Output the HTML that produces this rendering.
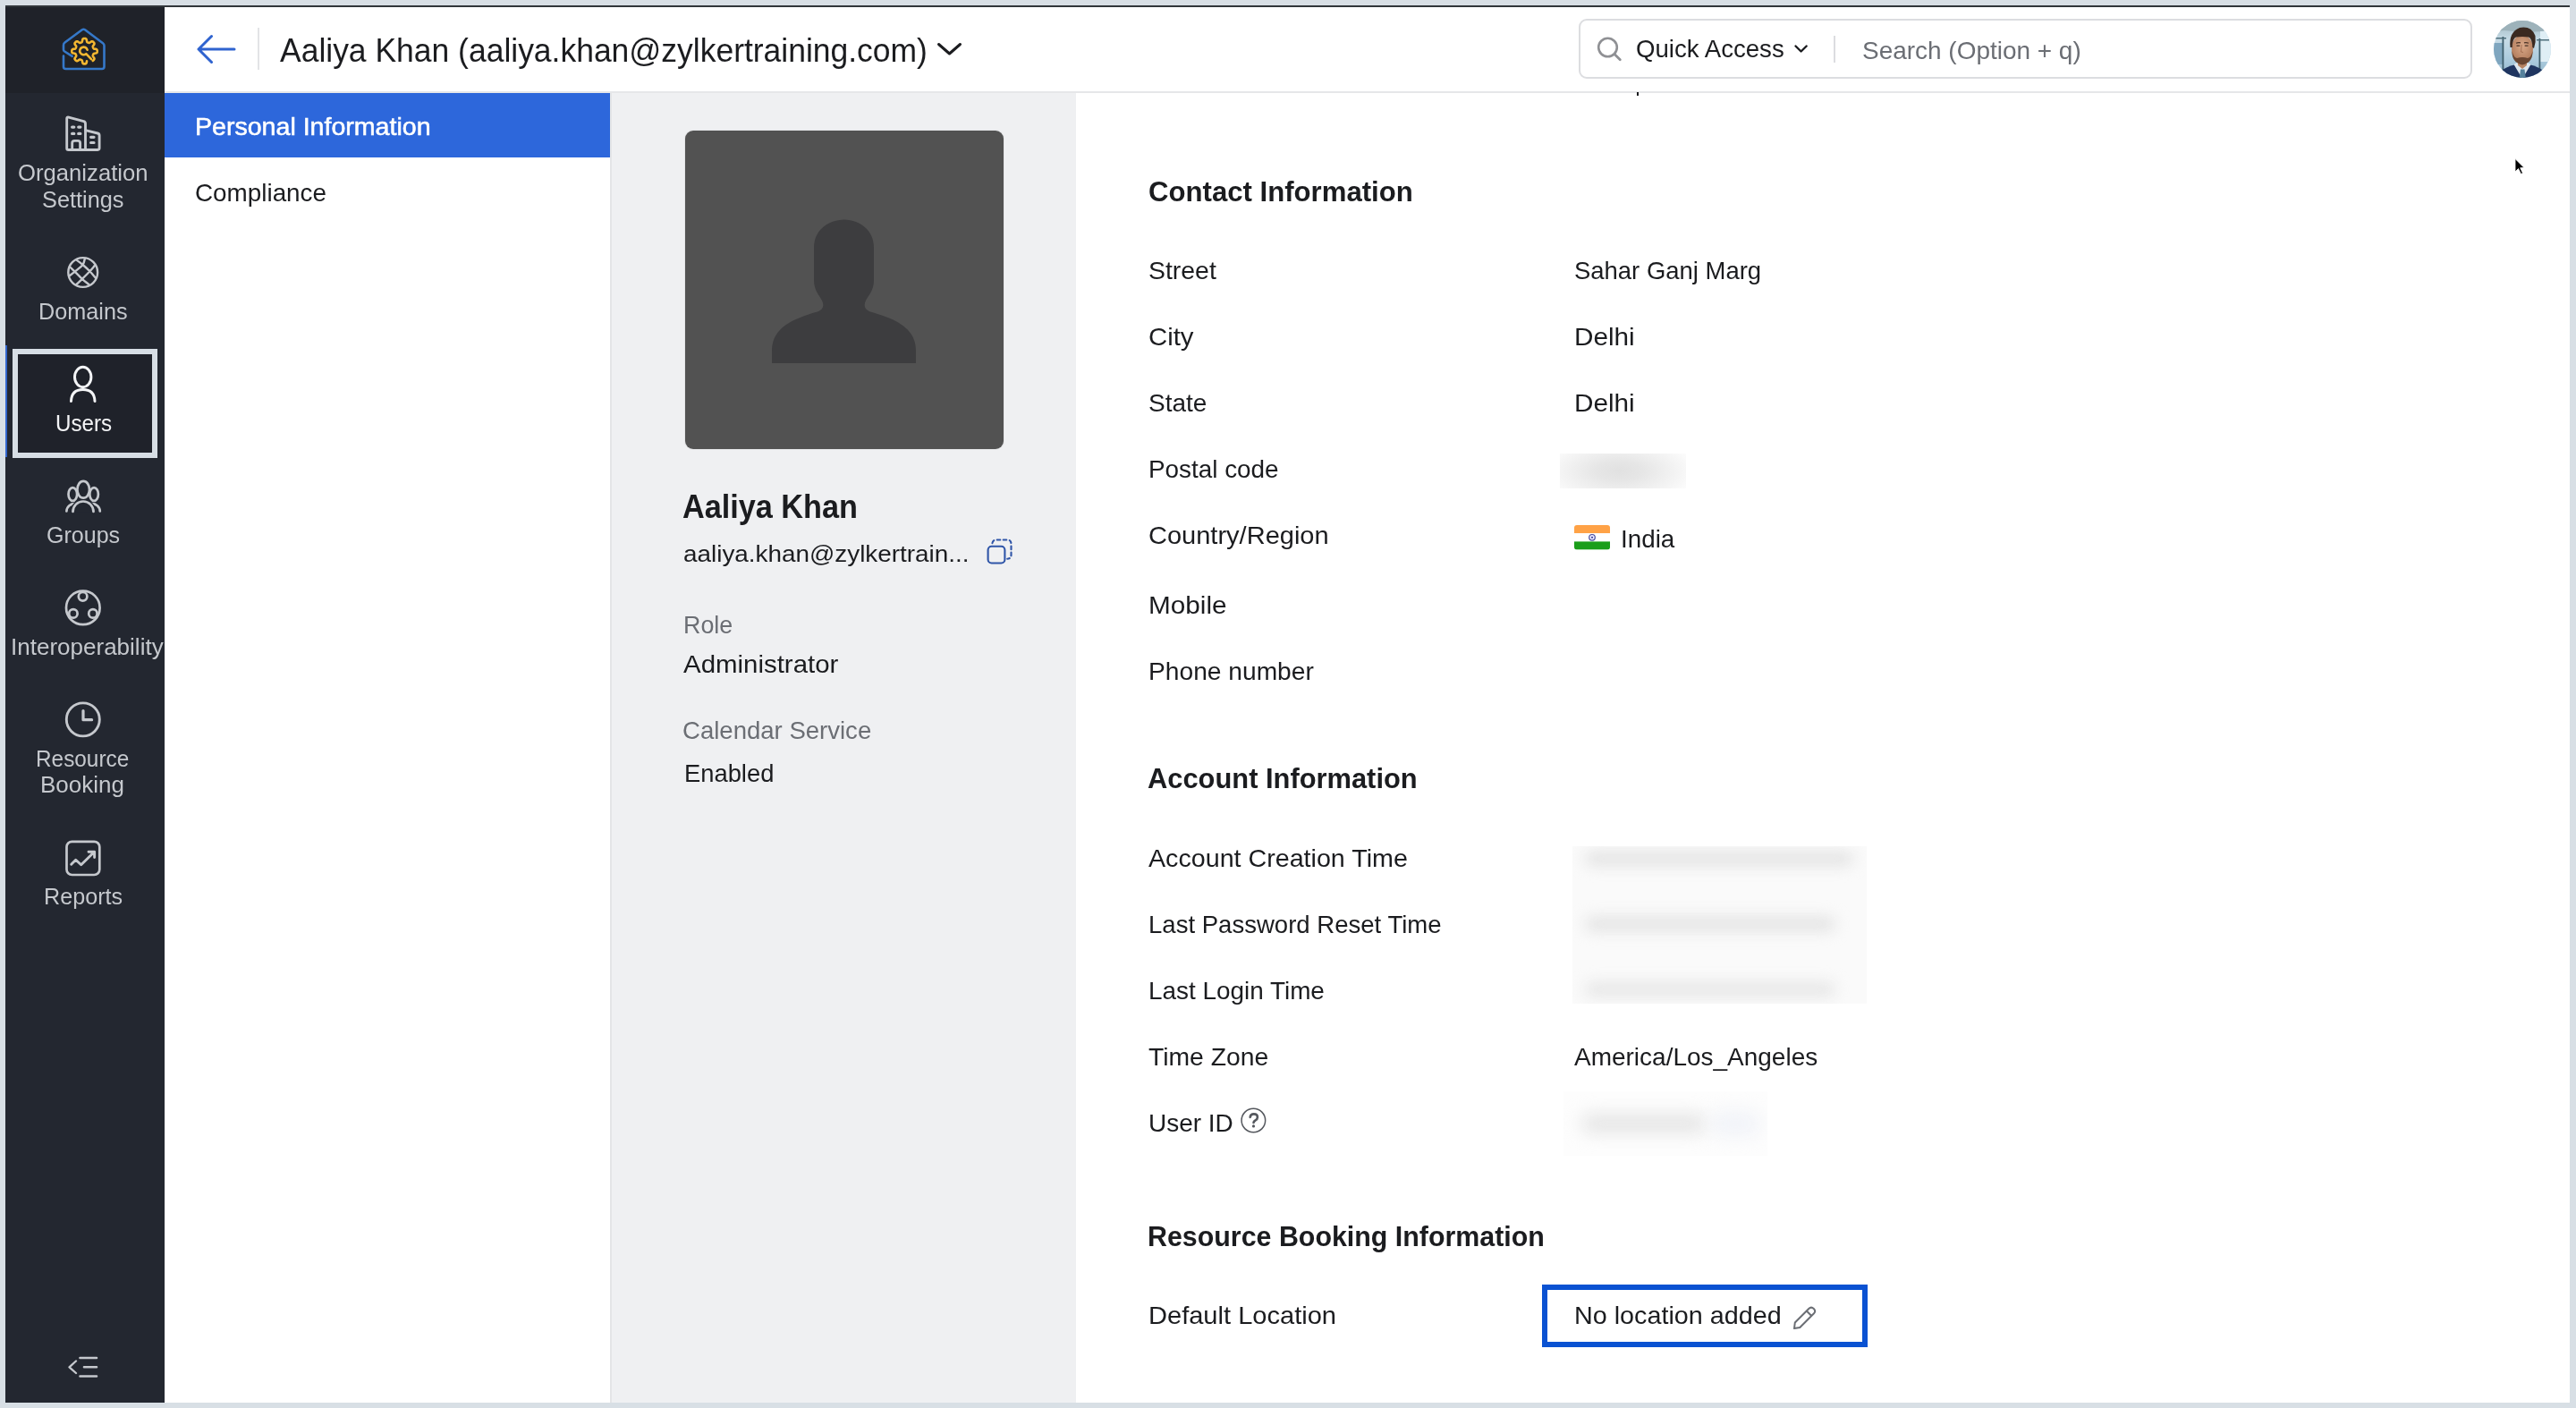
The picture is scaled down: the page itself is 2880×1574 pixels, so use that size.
<!DOCTYPE html>
<html><head><meta charset="utf-8"><style>
*{box-sizing:border-box;margin:0;padding:0}
html,body{width:2880px;height:1574px;overflow:hidden;background:#d8dfe5;font-family:"Liberation Sans",sans-serif}
.abs{position:absolute}
.t{position:absolute;white-space:nowrap;line-height:1;transform-origin:0 0}
</style></head><body>
<div class="abs" style="left:6px;top:6px;width:2867px;height:1562px;background:#ffffff"></div>
<div class="abs" style="left:6px;top:6px;width:2867px;height:2px;background:#31363a"></div>
<!-- sidebar -->
<div class="abs" style="left:6px;top:8px;width:178px;height:1560px;background:#232730"></div>
<div class="abs" style="left:6px;top:8px;width:178px;height:96px;background:#1f2229"></div>
<div class="abs" style="left:6px;top:386px;width:2px;height:125px;background:#3366cc"></div>
<div class="abs" style="left:14px;top:390px;width:162px;height:122px;border:6px solid #d7dee5;background:#1f222a"></div>

<svg class="abs" style="left:0;top:0" width="184" height="1574" viewBox="0 0 184 1574">
 <!-- logo -->
 <g fill="none" stroke-linecap="round" stroke-linejoin="round">
  <path d="M71 62.6 L71 74.5 Q71 77 73.5 77 L114 77 Q116.5 77 116.5 74.5 L116.5 51 Q116.5 49.3 115 48.2 L95 33.3 Q93.4 32.2 91.8 33.3 L72.5 47.5 Q71 48.6 71 50.5 L71 55.5 Q71 56.8 72.2 57.5 L80.7 62.8" stroke="#3578c9" stroke-width="2.6"/>
  <path d="M97.05 68.26 L96.88 69.42 L96.60 70.49 L96.20 71.04 L95.73 71.26 L95.24 71.36 L94.75 71.40 L94.25 71.40 L93.76 71.36 L93.27 71.26 L92.80 71.04 L92.40 70.49 L92.12 69.42 L91.95 68.26 L91.72 67.58 L91.43 67.25 L91.10 67.06 L90.77 66.91 L90.44 66.77 L90.10 66.64 L89.75 66.52 L89.36 66.47 L88.84 66.61 L88.04 67.15 L87.04 67.86 L86.22 68.18 L85.66 68.12 L85.21 67.88 L84.82 67.58 L84.46 67.24 L84.12 66.88 L83.82 66.49 L83.58 66.04 L83.52 65.48 L83.84 64.66 L84.55 63.66 L85.09 62.86 L85.23 62.34 L85.18 61.95 L85.06 61.60 L84.93 61.26 L84.79 60.93 L84.64 60.60 L84.45 60.27 L84.12 59.98 L83.44 59.75 L82.28 59.58 L81.21 59.30 L80.66 58.90 L80.44 58.43 L80.34 57.94 L80.30 57.45 L80.30 56.95 L80.34 56.46 L80.44 55.97 L80.66 55.50 L81.21 55.10 L82.28 54.82 L83.44 54.65 L84.12 54.42 L84.45 54.13 L84.64 53.80 L84.79 53.47 L84.93 53.14 L85.06 52.80 L85.18 52.45 L85.23 52.06 L85.09 51.54 L84.55 50.74 L83.84 49.74 L83.52 48.92 L83.58 48.36 L83.82 47.91 L84.12 47.52 L84.46 47.16 L84.82 46.82 L85.21 46.52 L85.66 46.28 L86.22 46.22 L87.04 46.54 L88.04 47.25 L88.84 47.79 L89.36 47.93 L89.75 47.88 L90.10 47.76 L90.44 47.63 L90.77 47.49 L91.10 47.34 L91.43 47.15 L91.72 46.82 L91.95 46.14 L92.12 44.98 L92.40 43.91 L92.80 43.36 L93.27 43.14 L93.76 43.04 L94.25 43.00 L94.75 43.00 L95.24 43.04 L95.73 43.14 L96.20 43.36 L96.60 43.91 L96.88 44.98 L97.05 46.14 L97.28 46.82 L97.57 47.15 L97.90 47.34 L98.23 47.49 L98.56 47.63 L98.90 47.76 L99.25 47.88 L99.64 47.93 L100.16 47.79 L100.96 47.25 L101.96 46.54 L102.78 46.22 L103.34 46.28 L103.79 46.52 L104.18 46.82 L104.54 47.16 L104.88 47.52 L105.18 47.91 L105.42 48.36 L105.48 48.92 L105.16 49.74 L104.45 50.74 L103.91 51.54 L103.77 52.06 L103.82 52.45 L103.94 52.80 L104.07 53.14 L104.21 53.47 L104.36 53.80 L104.55 54.13 L104.88 54.42 L105.56 54.65 L106.72 54.82 L107.79 55.10 L108.34 55.50 L108.56 55.97 L108.66 56.46 L108.70 56.95 L108.70 57.45 L108.66 57.94 L108.56 58.43 L108.34 58.90 L107.79 59.30 L106.72 59.58 L105.56 59.75 L104.88 59.98 L104.55 60.27 L104.36 60.60 L104.21 60.93 L104.07 61.26 L103.94 61.60 L103.82 61.95 L103.77 62.34 L103.91 62.86 L104.45 63.66 L105.16 64.66 L105.48 65.48 L105.42 66.04 L105.18 66.49 L104.88 66.88 L104.54 67.24 L104.18 67.58 L103.79 67.88" stroke="#f4b731" stroke-width="2.6"/>
  <path d="M97.65 55.79 A4.3 4.3 0 1 0 96.26 60.19 L102 66.2" stroke="#f4b731" stroke-width="2.6"/>
 </g>
 <g fill="none" stroke="#c5c8cd" stroke-width="2.7" stroke-linecap="round" stroke-linejoin="round">
  <!-- building -->
  <path d="M74.7 132.6 Q74.7 130.5 76.8 131.1 L93.6 135.6 Q95.5 136.2 95.5 138.2 L95.5 167.5 L76.5 167.5 Q74.7 167.5 74.7 165.7 Z" stroke-width="2.85"/>
  <path d="M95.5 145.6 L109.2 149 Q111.1 149.5 111.1 151.5 L111.1 165.6 Q111.1 167.5 109.2 167.5 L95.5 167.5" stroke-width="2.85"/>
  <path d="M80.6 142.1 h2.2 M87.7 142.1 h2.2 M80.6 149.4 h2.2 M87.7 149.4 h2.2 M101.6 153.3 h3.4 M101.6 159.5 h3.4" stroke-width="3.2"/>
  <path d="M80.7 167.5 V160 Q80.7 157.4 83.3 157.4 H87 Q89.6 157.4 89.6 160 V167.5" stroke-width="2.85"/>
  <!-- globe -->
  <circle cx="92.7" cy="304.5" r="16.4" stroke-width="2.4"/>
  <path d="M85.55 290.64 C87.88 292.43 90.07 293.90 92.55 296.00 C95.03 298.10 97.99 300.80 100.40 303.25 C102.81 305.70 104.80 308.23 107.01 310.72 M94.87 289.05 C94.10 291.37 94.41 293.58 92.55 296.00 C90.69 298.42 86.20 301.55 83.70 303.60 C81.20 305.65 79.61 306.72 77.56 308.27 M78.30 298.50 C80.10 300.20 81.43 301.38 83.70 303.60 C85.97 305.82 89.22 309.34 91.90 311.80 C94.58 314.26 97.17 316.19 99.81 318.39 M106.18 296.65 C104.26 298.85 102.78 300.73 100.40 303.25 C98.02 305.77 94.43 309.31 91.90 311.80 C89.37 314.29 87.44 316.06 85.21 318.18" stroke-width="2.4"/>
  <!-- groups -->
  <ellipse cx="81.3" cy="552.5" rx="4.8" ry="7.3"/>
  <ellipse cx="105.1" cy="552.5" rx="4.8" ry="7.3"/>
  <path d="M74.4 571.5 A8.8 8.8 0 0 1 84 563.2 M111.8 571.5 A8.8 8.8 0 0 0 102.2 563.2"/>
  <ellipse cx="93.2" cy="547.3" rx="6.8" ry="9.4" fill="#232730"/>
  <path d="M81.5 572.5 A11.5 11.5 0 0 1 104.5 572.5" fill="#232730" stroke="#232730" stroke-width="6"/>
  <path d="M81.5 572 A11.5 11.5 0 0 1 104.5 572"/>
  <!-- interoperability -->
  <circle cx="92.8" cy="679.4" r="18.8"/>
  <circle cx="92.6" cy="666.8" r="4.8" fill="#232730"/>
  <circle cx="81.9" cy="685.9" r="4.7" fill="#232730"/>
  <circle cx="103.9" cy="685.9" r="4.7" fill="#232730"/>
  <!-- clock -->
  <circle cx="92.8" cy="804.35" r="18.5" stroke-width="2.9"/>
  <path d="M93 794.5 V804.7 H102.6" stroke-width="3.2"/>
  <!-- reports -->
  <rect x="74.5" y="940.8" width="36.8" height="37.2" rx="6"/>
  <path d="M79.7 966.3 L84.7 961.3 L90.7 966.8 L105 952.7 M99 952.3 H105.6 V958.5" stroke-width="2.9"/>
  <!-- collapse -->
  <path d="M85 1521.5 L77.5 1528.3 L85 1535" stroke-width="2.3"/>
  <path d="M89.5 1518 H108 M94 1528.3 H108 M89.5 1538.5 H108" stroke-width="2.6"/>
 </g>
 <g fill="none" stroke="#f4f5f7" stroke-width="3" stroke-linecap="round">
  <ellipse cx="92.7" cy="421.5" rx="9.2" ry="11.2"/>
  <path d="M79.5 448.5 Q80 435.5 92.7 435.5 Q105.5 435.5 106 448.5"/>
 </g>
</svg>
<!-- header -->
<div class="abs" style="left:184px;top:102px;width:2689px;height:2px;background:#e6e7e9"></div>
<svg class="abs" style="left:210px;top:30px" width="70" height="50" viewBox="210 30 70 50">
 <path d="M262 55 H222.5 M236.5 40.5 L222 55 L236.5 69.5" fill="none" stroke="#2f63cf" stroke-width="3" stroke-linecap="round" stroke-linejoin="round"/>
</svg>
<div class="abs" style="left:288px;top:31px;width:2px;height:47px;background:#e3e4e6"></div>
<svg class="abs" style="left:1040px;top:40px" width="40" height="30" viewBox="1040 40 40 30">
 <path d="M1049.5 49.5 L1061.5 60 L1073.5 49.5" fill="none" stroke="#1b1c1f" stroke-width="3" stroke-linecap="round" stroke-linejoin="round"/>
</svg>
<div class="abs" style="left:1765px;top:21px;width:999px;height:67px;border:2px solid #dcdde0;border-radius:9px"></div>
<svg class="abs" style="left:1780px;top:36px" width="40" height="40" viewBox="1780 36 40 40">
 <circle cx="1797.5" cy="53" r="10.3" fill="none" stroke="#8f9094" stroke-width="2.6"/>
 <path d="M1805 60.5 L1811.3 66.8" stroke="#8f9094" stroke-width="2.8" stroke-linecap="round"/>
</svg>
<svg class="abs" style="left:2000px;top:44px" width="30" height="20" viewBox="2000 44 30 20">
 <path d="M2007.5 51.5 L2013.6 57.5 L2019.7 51.5" fill="none" stroke="#1b1c1f" stroke-width="2.4" stroke-linecap="round" stroke-linejoin="round"/>
</svg>
<div class="abs" style="left:2050px;top:40px;width:2px;height:30px;background:#dcdde0"></div>

<svg class="abs" style="left:2786px;top:21px" width="68" height="68" viewBox="2786 21 68 68">
 <defs>
  <clipPath id="av"><circle cx="2820" cy="55" r="32"/></clipPath>
  <linearGradient id="avbg" x1="0" y1="0" x2="0" y2="1">
   <stop offset="0" stop-color="#9fb6c0"/><stop offset=".35" stop-color="#c6dbe6"/><stop offset=".7" stop-color="#a9c9dc"/><stop offset="1" stop-color="#8fb3c8"/>
  </linearGradient>
  <radialGradient id="face" cx=".5" cy=".4" r=".6">
   <stop offset="0" stop-color="#d9a888"/><stop offset="1" stop-color="#b07a5a"/>
  </radialGradient>
 </defs>
 <g clip-path="url(#av)">
  <rect x="2786" y="21" width="68" height="68" fill="url(#avbg)"/>
  <path d="M2786 23 L2854 23 L2854 33 Q2830 38 2800 34 L2786 36 Z" fill="#9db2ba"/>
  <rect x="2840" y="35" width="14" height="34" fill="#dfeef5"/>
  <rect x="2786" y="48" width="12" height="24" fill="#7fa6bf"/>
  <rect x="2797.5" y="41" width="1.8" height="44" fill="#3f5e6c"/>
  <rect x="2838.5" y="43" width="1.8" height="42" fill="#3f5e6c"/>
  <rect x="2790" y="42" width="12" height="1.5" fill="#4f6f7c"/>
  <rect x="2836" y="44" width="14" height="1.5" fill="#4f6f7c"/>
  <path d="M2792 89 L2795 80 Q2803 74 2811 72.5 L2829 72.5 Q2837 74 2845 80 L2848 89 Z" fill="#1f3560"/>
  <path d="M2810.5 72 L2820 88 L2829.5 72 L2824 69 L2816 69 Z" fill="#dde7ef"/>
  <path d="M2818 77.5 L2822.5 77.5 L2824 89 L2816.5 89 Z" fill="#55819c"/>
  <path d="M2815 65 L2815 73 L2820 77 L2825 73 L2825 65 Z" fill="#b58363"/>
  <ellipse cx="2820" cy="54.5" rx="12" ry="15.5" fill="url(#face)"/>
  <path d="M2808.5 57 Q2808 70 2820 72.5 Q2832 70 2831.5 57 Q2830 64 2826 65 Q2820 63 2814 65 Q2810 64 2808.5 57 Z" fill="#6a4632"/>
  <path d="M2813.5 51.2 h3.8 M2822.7 51.2 h3.8" stroke="#4a3428" stroke-width="1.2"/>
  <path d="M2813 48.3 Q2815.5 47.2 2818 47.9 M2822 47.9 Q2824.5 47.2 2827 48.3" stroke="#4a3226" stroke-width="1.2" fill="none"/>
  <path d="M2819.3 50 L2818.5 58 L2821 58.5" stroke="#a06c50" stroke-width="0.9" fill="none"/>
  <path d="M2806.5 53 Q2804.5 36 2817 31 Q2830 28.5 2834.5 40 Q2835.5 47 2833 54 L2831.3 53 Q2831 43 2827 41.5 Q2820 40.3 2813 41.5 Q2809 43 2808.7 53 Z" fill="#3a2920"/>
 </g>
</svg>
<!-- left menu -->
<div class="abs" style="left:184px;top:104px;width:498px;height:72px;background:#2d67db"></div>
<div class="abs" style="left:682px;top:104px;width:2px;height:1464px;background:#e4e5e7"></div>
<!-- profile panel -->
<div class="abs" style="left:684px;top:104px;width:519px;height:1464px;background:#eff0f2"></div>
<div class="abs" style="left:765px;top:145px;width:358px;height:358px;border-radius:10px;background:#e4e5e7"></div>
<div class="abs" style="left:766px;top:146px;width:356px;height:356px;border-radius:9px;background:#525252"></div>
<svg class="abs" style="left:766px;top:146px" width="356" height="356" viewBox="766 146 356 356">
 <path d="M944 245.5 C958 245.5 977 255 977 277 L977 313 C977 325 971 330 968 336 C965 342 967 347 975 349 C998 356 1024 365 1024 392 L1024 406 L863 406 L863 392 C863 365 889 356 912 349 C920 347 922 342 919 336 C916 330 910 325 910 313 L910 277 C910 255 929 245.5 944 245.5 Z" fill="#3d3d3f"/>
</svg>
<svg class="abs" style="left:1098px;top:598px" width="40" height="40" viewBox="1098 598 40 40">
 <rect x="1104.6" y="610.7" width="18.8" height="18.8" rx="4" fill="none" stroke="#2f55a8" stroke-width="2.1"/>
 <path d="M1109.3 607.8 Q1109.8 603.5 1114.2 603.5 H1126 Q1130.5 603.5 1130.5 608 V620.2 Q1130.5 624.5 1126.2 624.7" fill="none" stroke="#2f55a8" stroke-width="2.1" stroke-linecap="round" stroke-dasharray="3.6 3.4" stroke-dashoffset="-0.6"/>
</svg>
<!-- details -->
<div class="abs" style="left:1829.5px;top:103px;width:2.5px;height:4px;background:#1b1c1f"></div>
<div class="abs" style="left:1744px;top:507px;width:141px;height:39px;background:radial-gradient(ellipse 62% 95% at 47% 50%, #e1e1e1 0%, #e6e6e6 30%, #f1f1f1 65%, #fcfcfc 100%)"></div>
<svg class="abs" style="left:1759px;top:586px" width="42" height="30" viewBox="1759 586 42 30">
 <defs><clipPath id="fl"><rect x="1760" y="587" width="40" height="27.6" rx="3"/></clipPath></defs>
 <g clip-path="url(#fl)">
  <rect x="1760" y="587" width="40" height="9.2" fill="#ffa246"/>
  <rect x="1760" y="596.2" width="40" height="9.2" fill="#ffffff"/>
  <rect x="1760" y="605.4" width="40" height="9.2" fill="#1b9e1a"/>
 </g>
 <circle cx="1780" cy="600.8" r="3.3" fill="#e6e6ff" stroke="#4a4f9f" stroke-width="1.2"/>
 <circle cx="1780" cy="600.8" r="1" fill="#2a2f8f"/>
</svg>
<div class="abs" style="left:1758px;top:946px;width:329px;height:176px;overflow:hidden;background:#fafafa">
 <div class="abs" style="left:14px;top:6px;width:300px;height:16px;border-radius:8px;background:#e3e3e3;filter:blur(8px)"></div>
 <div class="abs" style="left:14px;top:79px;width:280px;height:16px;border-radius:8px;background:#e3e3e3;filter:blur(8px)"></div>
 <div class="abs" style="left:14px;top:152px;width:280px;height:16px;border-radius:8px;background:#e6e6e6;filter:blur(8px)"></div>
</div>
<div class="abs" style="left:1748px;top:1220px;width:228px;height:72px;overflow:hidden;background:#fdfdfd">
 <div class="abs" style="left:20px;top:26px;width:140px;height:20px;border-radius:10px;background:#e3e3e3;filter:blur(10px)"></div>
 <div class="abs" style="left:165px;top:22px;width:55px;height:28px;border-radius:14px;background:#f1f3f8;filter:blur(10px)"></div>
</div>
<svg class="abs" style="left:1384px;top:1234px" width="36" height="38" viewBox="1384 1234 36 38">
 <circle cx="1401.35" cy="1252.5" r="13.3" fill="none" stroke="#55585e" stroke-width="1.5"/>
 <path d="M1397.7 1248.9 Q1398.1 1245.4 1401.8 1245.4 Q1405.9 1245.4 1405.9 1248.9 Q1405.9 1251.1 1403.5 1252.5 Q1401.5 1253.6 1401.5 1255" fill="none" stroke="#55585e" stroke-width="2.6" stroke-linecap="round"/>
 <circle cx="1401.5" cy="1258.9" r="1.6" fill="#55585e"/>
</svg>
<div class="abs" style="left:1724px;top:1436px;width:364px;height:70px;border:6px solid #0a52d2"></div>
<svg class="abs" style="left:2000px;top:1455px" width="36" height="36" viewBox="2000 1455 36 36">
 <path d="M2006 1485 L2006.8 1478.5 L2022.5 1462.8 Q2025 1460.3 2027.8 1463 Q2030.5 1465.8 2028 1468.3 L2012.3 1484 Z M2019.8 1465.5 L2025.3 1471" fill="none" stroke="#6b6e74" stroke-width="2" stroke-linejoin="round"/>
</svg>
<svg class="abs" style="left:2805px;top:172px" width="24" height="26" viewBox="2805 172 24 26">
 <path d="M2812 177.5 L2812 192 L2815.5 188.5 L2818.5 194.5 L2820.5 193.5 L2817.7 187.7 L2822 187.5 Z" fill="#000" stroke="#fff" stroke-width="0.8"/>
</svg>
<div class="t" id="title" style="left:312.68px;top:39px;font-size:36px;font-weight:400;color:#1b1c1f;transform:scaleX(0.9851);">Aaliya Khan (aaliya.khan@zylkertraining.com)</div>
<div class="t" id="qa" style="left:1828.91px;top:41px;font-size:28px;font-weight:400;color:#1b1c1f;transform:scaleX(0.9861);">Quick Access</div>
<div class="t" id="search" style="left:2082.07px;top:43px;font-size:28px;font-weight:400;color:#6b6e74;transform:scaleX(0.9983);">Search (Option + q)</div>
<div class="t" id="pi" style="left:217.75px;top:128px;font-size:28px;font-weight:400;color:#ffffff;transform:scaleX(1.0201);-webkit-text-stroke:0.55px #ffffff;">Personal Information</div>
<div class="t" id="comp" style="left:217.86px;top:202px;font-size:28px;font-weight:400;color:#1b1c1f;transform:scaleX(0.9943);">Compliance</div>
<div class="t" id="s_org" style="left:19.95px;top:180px;font-size:26px;font-weight:400;color:#c5c8cd;transform:scaleX(0.9875);">Organization</div>
<div class="t" id="s_set" style="left:46.71px;top:210px;font-size:26px;font-weight:400;color:#c5c8cd;transform:scaleX(0.9741);">Settings</div>
<div class="t" id="s_dom" style="left:43.25px;top:335px;font-size:26px;font-weight:400;color:#c5c8cd;transform:scaleX(0.9700);">Domains</div>
<div class="t" id="s_usr" style="left:61.65px;top:460px;font-size:26px;font-weight:400;color:#f4f5f7;transform:scaleX(0.9293);">Users</div>
<div class="t" id="s_grp" style="left:52.10px;top:585px;font-size:26px;font-weight:400;color:#c5c8cd;transform:scaleX(0.9631);">Groups</div>
<div class="t" id="s_int" style="left:11.51px;top:710px;font-size:26px;font-weight:400;color:#c5c8cd;transform:scaleX(1.0007);">Interoperability</div>
<div class="t" id="s_res" style="left:39.73px;top:835px;font-size:26px;font-weight:400;color:#c5c8cd;transform:scaleX(0.9366);">Resource</div>
<div class="t" id="s_boo" style="left:45.25px;top:864px;font-size:26px;font-weight:400;color:#c5c8cd;transform:scaleX(0.9999);">Booking</div>
<div class="t" id="s_rep" style="left:48.67px;top:989px;font-size:26px;font-weight:400;color:#c5c8cd;transform:scaleX(0.9680);">Reports</div>
<div class="t" id="name" style="left:762.72px;top:549px;font-size:36px;font-weight:700;color:#1b1c1f;transform:scaleX(0.9507);">Aaliya Khan</div>
<div class="t" id="email" style="left:763.64px;top:606px;font-size:26px;font-weight:400;color:#1b1c1f;transform:scaleX(1.0719);">aaliya.khan@zylkertrain...</div>
<div class="t" id="role_l" style="left:764.28px;top:685px;font-size:28px;font-weight:400;color:#6b6e74;transform:scaleX(0.9591);">Role</div>
<div class="t" id="role_v" style="left:764.00px;top:729px;font-size:28px;font-weight:400;color:#1b1c1f;transform:scaleX(1.0509);">Administrator</div>
<div class="t" id="cal_l" style="left:763.48px;top:803px;font-size:28px;font-weight:400;color:#6b6e74;transform:scaleX(0.9834);">Calendar Service</div>
<div class="t" id="cal_v" style="left:765.22px;top:851px;font-size:28px;font-weight:400;color:#1b1c1f;transform:scaleX(0.9767);">Enabled</div>
<div class="t" id="h_contact" style="left:1283.86px;top:198px;font-size:32px;font-weight:700;color:#1b1c1f;transform:scaleX(0.9731);">Contact Information</div>
<div class="t" id="l_street" style="left:1283.80px;top:289px;font-size:28px;font-weight:400;color:#1b1c1f;transform:scaleX(1.0147);">Street</div>
<div class="t" id="l_city" style="left:1283.80px;top:363px;font-size:28px;font-weight:400;color:#1b1c1f;transform:scaleX(1.0465);">City</div>
<div class="t" id="l_state" style="left:1283.80px;top:437px;font-size:28px;font-weight:400;color:#1b1c1f;transform:scaleX(0.9993);">State</div>
<div class="t" id="l_postal" style="left:1283.80px;top:511px;font-size:28px;font-weight:400;color:#1b1c1f;transform:scaleX(0.9952);">Postal code</div>
<div class="t" id="l_country" style="left:1283.80px;top:585px;font-size:28px;font-weight:400;color:#1b1c1f;transform:scaleX(1.0364);">Country/Region</div>
<div class="t" id="l_mobile" style="left:1283.80px;top:663px;font-size:28px;font-weight:400;color:#1b1c1f;transform:scaleX(1.0614);">Mobile</div>
<div class="t" id="l_phone" style="left:1283.80px;top:737px;font-size:28px;font-weight:400;color:#1b1c1f;transform:scaleX(1.0062);">Phone number</div>
<div class="t" id="h_account" style="left:1283.38px;top:854px;font-size:32px;font-weight:700;color:#1b1c1f;transform:scaleX(0.9641);">Account Information</div>
<div class="t" id="l_act" style="left:1283.80px;top:946px;font-size:28px;font-weight:400;color:#1b1c1f;transform:scaleX(1.0233);">Account Creation Time</div>
<div class="t" id="l_lpr" style="left:1283.80px;top:1020px;font-size:28px;font-weight:400;color:#1b1c1f;transform:scaleX(0.9836);">Last Password Reset Time</div>
<div class="t" id="l_llt" style="left:1283.80px;top:1094px;font-size:28px;font-weight:400;color:#1b1c1f;transform:scaleX(0.9960);">Last Login Time</div>
<div class="t" id="l_tz" style="left:1283.80px;top:1168px;font-size:28px;font-weight:400;color:#1b1c1f;transform:scaleX(1.0112);">Time Zone</div>
<div class="t" id="l_uid" style="left:1283.80px;top:1242px;font-size:28px;font-weight:400;color:#1b1c1f;transform:scaleX(0.9990);">User ID</div>
<div class="t" id="h_res" style="left:1282.88px;top:1366px;font-size:32px;font-weight:700;color:#1b1c1f;transform:scaleX(0.9493);">Resource Booking Information</div>
<div class="t" id="l_def" style="left:1283.80px;top:1457px;font-size:28px;font-weight:400;color:#1b1c1f;transform:scaleX(1.0377);">Default Location</div>
<div class="t" id="v_street" style="left:1759.80px;top:289px;font-size:28px;font-weight:400;color:#1b1c1f;transform:scaleX(0.9806);">Sahar Ganj Marg</div>
<div class="t" id="v_city" style="left:1759.80px;top:363px;font-size:28px;font-weight:400;color:#1b1c1f;transform:scaleX(1.0613);">Delhi</div>
<div class="t" id="v_state" style="left:1759.80px;top:437px;font-size:28px;font-weight:400;color:#1b1c1f;transform:scaleX(1.0613);">Delhi</div>
<div class="t" id="v_india" style="left:1811.83px;top:589px;font-size:28px;font-weight:400;color:#1b1c1f;transform:scaleX(0.9933);">India</div>
<div class="t" id="v_tz" style="left:1759.80px;top:1168px;font-size:28px;font-weight:400;color:#1b1c1f;transform:scaleX(0.9994);">America/Los_Angeles</div>
<div class="t" id="v_loc" style="left:1759.54px;top:1457px;font-size:28px;font-weight:400;color:#1b1c1f;transform:scaleX(1.0264);">No location added</div>
</body></html>
